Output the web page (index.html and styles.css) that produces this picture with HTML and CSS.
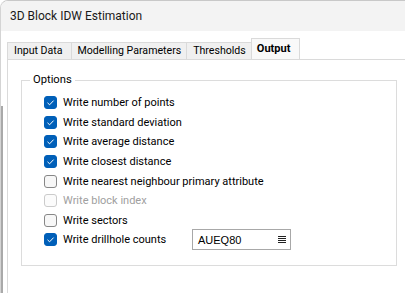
FILE: index.html
```html
<!DOCTYPE html>
<html>
<head>
<meta charset="utf-8">
<link rel="stylesheet" href="styles.css">
</head>
<body>
<div class="window">
  <div class="titlebar">3D Block IDW Estimation</div>
  <div class="content">
    <div class="tabs">
      <div class="tab first">Input Data</div>
      <div class="tab">Modelling Parameters</div>
      <div class="tab">Thresholds</div>
      <div class="tab active">Output</div>
    </div>
    <div class="panel">
      <div class="group">
        <div class="group-label">Options</div>
        <div class="row"><span class="cb checked"><svg viewBox="0 0 13 13"><path d="M3.5 6.8 L5.6 8.8 L9.6 4.6" /></svg></span><span class="lbl">Write number of points</span></div>
        <div class="row"><span class="cb checked"><svg viewBox="0 0 13 13"><path d="M3.5 6.8 L5.6 8.8 L9.6 4.6" /></svg></span><span class="lbl">Write standard deviation</span></div>
        <div class="row"><span class="cb checked"><svg viewBox="0 0 13 13"><path d="M3.5 6.8 L5.6 8.8 L9.6 4.6" /></svg></span><span class="lbl">Write average distance</span></div>
        <div class="row"><span class="cb checked"><svg viewBox="0 0 13 13"><path d="M3.5 6.8 L5.6 8.8 L9.6 4.6" /></svg></span><span class="lbl">Write closest distance</span></div>
        <div class="row"><span class="cb"></span><span class="lbl">Write nearest neighbour primary attribute</span></div>
        <div class="row disabled"><span class="cb"></span><span class="lbl">Write block index</span></div>
        <div class="row"><span class="cb"></span><span class="lbl">Write sectors</span></div>
        <div class="row"><span class="cb checked"><svg viewBox="0 0 13 13"><path d="M3.5 6.8 L5.6 8.8 L9.6 4.6" /></svg></span><span class="lbl fixed">Write drillhole counts</span>
          <div class="combo"><span>AUEQ80</span><svg class="list-icon" viewBox="0 0 8 7"><path d="M0 0.5H8M0 2.5H8M0 4.5H8M0 6.5H8" /></svg></div>
        </div>
      </div>
    </div>
  </div>
  <div class="edge"></div>
</div>
</body>
</html>
```
FILE: styles.css
```css
html, body {
  margin: 0;
  padding: 0;
  background: #ffffff;
}
body {
  width: 405px;
  height: 293px;
  overflow: hidden;
  font-family: Roboto, "Noto Sans", sans-serif;
  font-size: 11px;
  color: #000;
}
.window {
  position: relative;
  height: 292px;
  border-top: 1px solid #c8c8c8;
  border-left: 1px solid #d4d4d4;
  border-top-left-radius: 8px;
  overflow: hidden;
  background: #fff;
}
.titlebar {
  height: 30px;
  line-height: 30px;
  padding-left: 9px;
  background: #f3f3f3;
  font-size: 12px;
  color: #1a1a1a;
}
.content {
  padding-top: 7px;
  padding-left: 6px;
  background: #fff;
}
.tabs {
  display: flex;
  align-items: flex-end;
  height: 21px;
}
.tab {
  height: 17px;
  line-height: 16px;
  padding: 0 5px 0 6px;
  border: 1px solid #dadada;
  border-bottom: none;
  border-right: none;
  background: #f0f0f0;
  box-sizing: border-box;
  font-size: 10.6px;
}
.tab.first {
  padding-right: 8px;
}
.tab.active {
  height: 21px;
  line-height: 19px;
  background: #f9f9f9;
  font-weight: bold;
  padding: 0 9px 0 5px;
  border-right: 1px solid #dadada;
  font-size: 11px;
}
.panel {
  border: 1px solid #dadada;
  border-bottom: none;
  border-right: none;
  height: 240px;
  padding-top: 20px;
  padding-left: 13px;
  padding-right: 8px;
  background: #fff;
}
.group {
  position: relative;
  border: 1px solid #dcdcdc;
  padding: 12px 0 0 22px;
  box-sizing: border-box;
  height: 186px;
}
.group-label {
  position: absolute;
  left: 8px;
  top: -9px;
  padding: 0 3px;
  background: #fff;
  line-height: 16px;
  font-size: 11.2px;
}
.row {
  display: flex;
  align-items: center;
  height: 19.6px;
}
.cb {
  width: 13px;
  height: 13px;
  box-sizing: border-box;
  border: 1px solid #878787;
  border-radius: 3px;
  background: #f7f7f7;
  margin-right: 6px;
  flex: none;
  display: flex;
}
.cb.checked {
  background: #005fb8;
  border-color: #005fb8;
}
.cb svg {
  width: 13px;
  height: 13px;
  margin: -1px;
}
.cb svg path {
  fill: none;
  stroke: #fff;
  stroke-width: 1;
}
.disabled .cb {
  border-color: #cbcbcb;
  background: #fbfbfb;
}
.disabled .lbl {
  color: #a0a0a0;
}
.lbl.fixed {
  width: 129px;
}
.combo {
  width: 99px;
  height: 21px;
  box-sizing: border-box;
  border: 1px solid #a8a8a8;
  display: flex;
  align-items: center;
  justify-content: space-between;
  padding: 0 4px 0 5px;
  background: #fff;
  font-family: "Liberation Sans", Arial, sans-serif;
  font-size: 11px;
}
.list-icon {
  width: 8px;
  height: 7px;
}
.list-icon path {
  stroke: #222;
  stroke-width: 1;
  fill: none;
}
.edge {
  position: absolute;
  left: -1px;
  top: 105px;
  width: 3px;
  bottom: 0;
  background: #a9a9a9;
}
```
